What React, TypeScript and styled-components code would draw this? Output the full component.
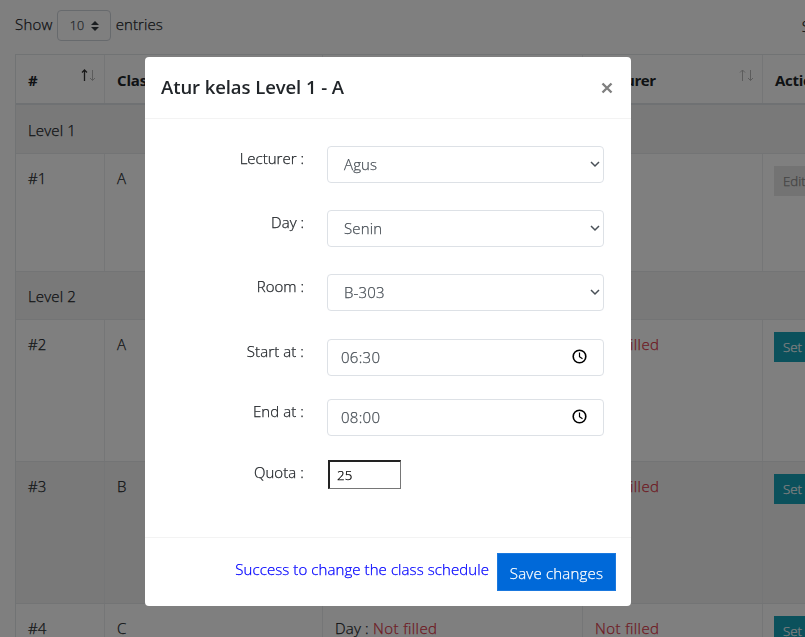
import React from "react";
import styled, { createGlobalStyle } from "styled-components";

const GlobalStyle = createGlobalStyle`
  * { box-sizing: border-box; }
  html, body { margin: 0; height: 637px; overflow: hidden; background: #fff; }
  body {
    font-family: "Open Sans", "Noto Sans", sans-serif;
    font-size: 15px;
    font-weight: 300;
    line-height: 24px;
    color: #212529;
    -webkit-text-stroke: 0.25px currentColor;
  }
`;

const Page = styled.div`
  height: 637px;
  overflow: hidden;
  padding: 10px 0 0 15px;
`;

const Label = styled.span<{ $track?: number; $size?: number; $weight?: number }>`
  letter-spacing: ${(p) => p.$track ?? 0.08}px;
  font-size: ${(p) => p.$size ?? 15}px;
  font-weight: ${(p) => p.$weight ?? 300};
  -webkit-text-stroke-width: ${(p) => (p.$weight ? 0 : 0.25)}px;
  white-space: nowrap;
`;

const Toolbar = styled.div`
  display: flex;
  width: 1000px;
  height: 31px;
  padding-bottom: 3px;
  align-items: center;
`;

const LengthSelect = styled.div`
  display: flex;
  align-items: center;
  justify-content: space-between;
  width: 54px;
  height: 31px;
  margin: 3px 5px 0 4px;
  padding: 0 11px 0 12px;
  border: 1px solid #ced4da;
  border-radius: 4px;
  color: #495057;
`;

const SearchLabel = styled.div`
  margin-left: 639px;
  padding-top: 3px;
`;

const Table = styled.div`
  width: 960px;
  margin-top: 13px;
  border: 1px solid #e3e7e9;
  border-width: 1px 0 0 1px;
`;

const Row = styled.div<{ $height: number; $striped?: boolean }>`
  display: grid;
  grid-template-columns: 89px 218px 260px 180px 212px;
  height: ${(p) => p.$height}px;
  background: ${(p) => (p.$striped ? "#f2f2f2" : "#fff")};
  border-bottom: 1px solid #e6e9eb;
`;

const HeadRow = styled(Row)`
  border-bottom: 2px solid #dee2e6;
`;

const Cell = styled.div`
  padding: 12px 12px 0;
  border-right: 1px solid #eaedef;
`;

const HeadCell = styled(Cell)`
  display: flex;
  justify-content: space-between;
  padding: 13px 8px 0 12px;
`;

const GroupCell = styled.div<{ $top: number }>`
  grid-column: 1 / -1;
  padding: ${(p) => p.$top}px 12px 0;
  letter-spacing: 0.15px;
`;

const Missing = styled(Label)`
  color: #dc3545;
`;

const RowButton = styled.div<{ $disabled?: boolean }>`
  width: 90px;
  height: 30px;
  margin-left: -1px;
  padding: 3px 9px 0;
  font-size: 13.3px;
  white-space: nowrap;
  color: ${(p) => (p.$disabled ? "#888" : "#fff")};
  background: ${(p) => (p.$disabled ? "#e6e6e6" : "#17a2b8")};
`;

const Backdrop = styled.div`
  position: fixed;
  inset: 0;
  padding: 57px 0 0 145px;
  background: rgba(0, 0, 0, 0.5);
`;

const Dialog = styled.section`
  display: flex;
  flex-direction: column;
  width: 486px;
  height: 549px;
  overflow: hidden;
  background: #fff;
  border-radius: 4px;
`;

const DialogHeader = styled.header`
  display: flex;
  justify-content: space-between;
  height: 62px;
  padding: 18px 18px 0 16px;
  border-bottom: 1px solid #f3f3f3;
`;

const CloseIcon = styled.svg`
  margin-top: 6.5px;
`;

const Form = styled.div`
  flex: 1;
  padding: 27px 27px 0 0;
`;

const FormRow = styled.div<{ $height: number }>`
  display: grid;
  grid-template-columns: 159px 277px;
  column-gap: 23px;
  height: ${(p) => p.$height}px;
`;

const FieldName = styled.div`
  text-align: right;
`;

const Field = styled.div<{ $inset: number; $end: number }>`
  display: flex;
  align-items: center;
  justify-content: space-between;
  height: 37px;
  padding: 0 ${(p) => p.$end}px 1px ${(p) => p.$inset}px;
  border: 1px solid #dde1e6;
  border-radius: 4px;
  color: #495057;
`;

const QuotaField = styled.div`
  width: 73px;
  height: 29px;
  margin: 0 0 0 1px;
  padding: 0 7px;
  border: solid;
  border-color: #222 #767676 #767676 #222;
  border-width: 2px 1px 1px 2px;
  color: #000;
`;

const DialogFooter = styled.footer`
  display: flex;
  justify-content: flex-end;
  height: 69px;
  padding: 15px 15px 0;
  border-top: 1px solid #f3f3f3;
`;

const Success = styled.div`
  margin: 4px 8px 0 0;
  color: #0000ff;
`;

const SaveButton = styled.div`
  width: 119px;
  height: 38px;
  padding-top: 7px;
  text-align: center;
  color: #fff;
  background: #0069d9;
  border: 1px solid #1a78de;
`;

const SortArrows = ({ active }: { active?: boolean }) => (
  <svg width="15" height="14" viewBox="0 0 15 14" fill="none">
    <path d="M3.500 13V2M1 4.500L3.500 2l2.500 2.500" stroke={active ? "#333" : "#b9b9b9"} strokeWidth={active ? 1.3 : 1} />
    <path d="M11.500 2v10.500M9 10l2.500 2.500 2.500-2.500" stroke="#b9b9b9" />
  </svg>
);

const Chevron = () => (
  <svg width="10" height="7" viewBox="0 0 10 7" fill="none">
    <path d="M1 1l4 4 4-4" stroke="#495057" strokeWidth="1.500" />
  </svg>
);

const Clock = () => (
  <svg width="16" height="16" viewBox="0 0 16 16" fill="none" stroke="#000">
    <circle cx="7.500" cy="7.500" r="6.300" strokeWidth="1.600" />
    <path d="M7.500 3.500v4.300l3 2" strokeWidth="1.200" />
  </svg>
);

const choices = [
  { name: "Lecturer :", value: "Agus", height: 64 },
  { name: "Day :", value: "Senin", height: 64 },
  { name: "Room :", value: "B-303", height: 65 },
];

const times = [
  { name: "Start at :", value: "06:30", height: 60 },
  { name: "End at :", value: "08:00", height: 61 },
];

const classes = [
  { id: "#2", name: "A", striped: false, day: "" },
  { id: "#3", name: "B", striped: true, day: "" },
  { id: "#4", name: "C", striped: false, day: "Not filled" },
];

export default function App() {
  return (
    <>
      <GlobalStyle />
      <Page>
        <Toolbar>
          <Label $track={0.25}>Show</Label>
          <LengthSelect>
            <Label $size={12.5}>10</Label>
            <svg width="8" height="10" viewBox="0 0 8 10" fill="#343a40">
              <path d="M0 4l4-4 4 4zM0 6l4 4 4-4z" />
            </svg>
          </LengthSelect>
          <Label>entries</Label>
          <SearchLabel>Search:</SearchLabel>
        </Toolbar>
        <Table>
          <HeadRow $height={50}>
            <HeadCell><Label $weight={700}>#</Label><SortArrows active /></HeadCell>
            <HeadCell><Label $weight={700} $track={-0.15}>Class</Label></HeadCell>
            <HeadCell />
            <HeadCell><Label $weight={700} $track={-0.4}>Lecturer</Label><SortArrows /></HeadCell>
            <HeadCell><Label $weight={700} $track={-0.3}>Action</Label></HeadCell>
          </HeadRow>
          <Row $height={49} $striped><GroupCell $top={13}>Level 1</GroupCell></Row>
          <Row $height={118}>
            <Cell>#1</Cell><Cell>A</Cell><Cell /><Cell />
            <Cell><RowButton $disabled>Edit</RowButton></Cell>
          </Row>
          <Row $height={48} $striped><GroupCell $top={12}>Level 2</GroupCell></Row>
          {classes.map((item) => (
            <Row key={item.id} $height={142} $striped={item.striped}>
              <Cell>{item.id}</Cell>
              <Cell>{item.name}</Cell>
              <Cell>{item.day && <><Label $track={0.2}>Day : </Label><Missing $track={0.4}>{item.day}</Missing></>}</Cell>
              <Cell><Missing $track={0.4}>Not filled</Missing></Cell>
              <Cell><RowButton>Set</RowButton></Cell>
            </Row>
          ))}
        </Table>
      </Page>
      <Backdrop>
        <Dialog>
          <DialogHeader>
            <Label $size={18.5} $weight={600} $track={-0.08}>Atur kelas Level 1 - A</Label>
            <CloseIcon width="12" height="12" viewBox="0 0 12 12" fill="none">
              <path d="M1.500 1.500l9 9M10.500 1.500l-9 9" stroke="#7f7f7f" strokeWidth="2.400" />
            </CloseIcon>
          </DialogHeader>
          <Form>
            {choices.map((item) => (
              <FormRow key={item.name} $height={item.height}>
                <FieldName><Label $track={0}>{item.name}</Label></FieldName>
                <Field $inset={16} $end={3}><Label $track={0.15}>{item.value}</Label><Chevron /></Field>
              </FormRow>
            ))}
            {times.map((item) => (
              <FormRow key={item.name} $height={item.height}>
                <FieldName><Label>{item.name}</Label></FieldName>
                <Field $inset={13} $end={15}><Label $track={0.3}>{item.value}</Label><Clock /></Field>
              </FormRow>
            ))}
            <FormRow $height={30}>
              <FieldName><Label>Quota :</Label></FieldName>
              <QuotaField><Label $size={13.3}>25</Label></QuotaField>
            </FormRow>
          </Form>
          <DialogFooter>
            <Success><Label>Success to change the class schedule</Label></Success>
            <SaveButton><Label $track={0.2}>Save changes</Label></SaveButton>
          </DialogFooter>
        </Dialog>
      </Backdrop>
    </>
  );
}
